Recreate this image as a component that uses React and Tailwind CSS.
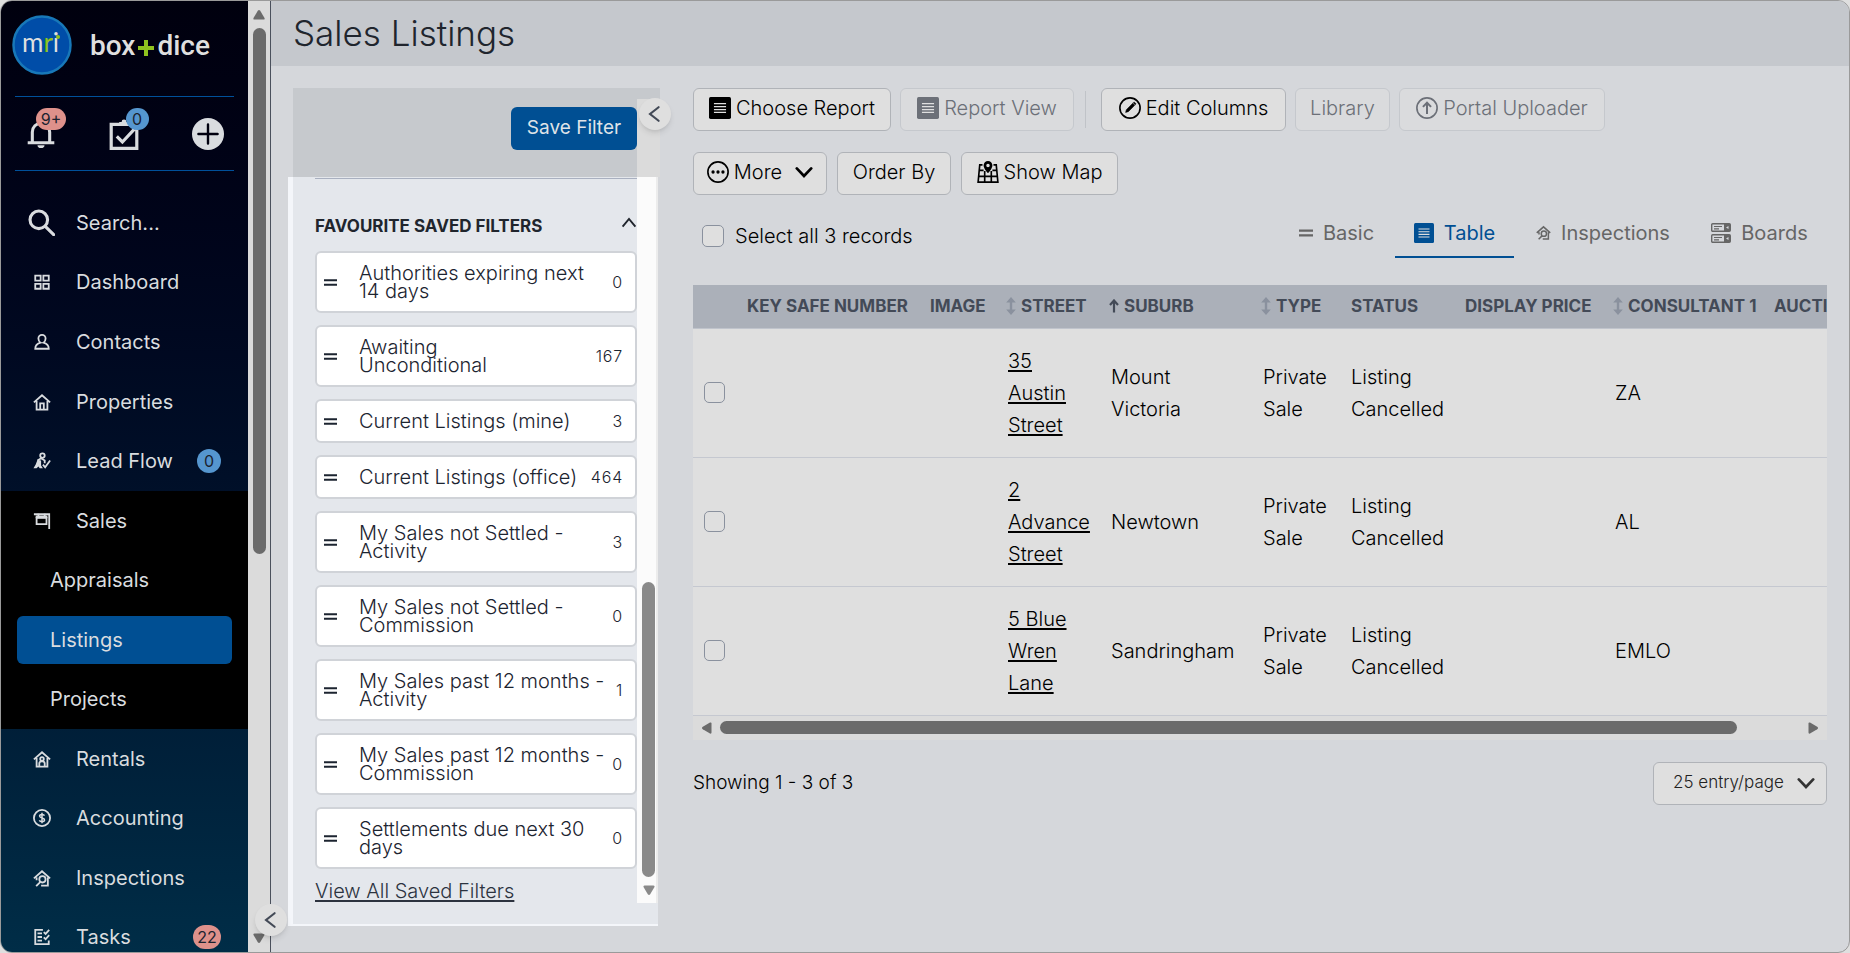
import clsx from "clsx";

const mainNav = [
  { label: "Dashboard", icon: "dashboard" },
  { label: "Contacts", icon: "contact" },
  { label: "Properties", icon: "home" },
  { label: "Lead Flow", icon: "lead", badge: "0", badgeClass: "bg-[#5596cf] w-6" },
];

const salesNav = [{ label: "Appraisals" }, { label: "Listings", active: true }, { label: "Projects" }];

const lowerNav = [
  { label: "Rentals", icon: "rentals" },
  { label: "Accounting", icon: "dollar" },
  { label: "Inspections", icon: "inspect" },
  { label: "Tasks", icon: "tasks", badge: "22", badgeClass: "bg-[#de918b] w-7" },
];

const filters = [
  { name: "Authorities expiring next\n14 days", count: 0 },
  { name: "Awaiting\nUnconditional", count: 167 },
  { name: "Current Listings (mine)", count: 3 },
  { name: "Current Listings (office)", count: 464 },
  { name: "My Sales not Settled -\nActivity", count: 3 },
  { name: "My Sales not Settled -\nCommission", count: 0 },
  { name: "My Sales past 12 months -\nActivity", count: 1 },
  { name: "My Sales past 12 months -\nCommission", count: 0 },
  { name: "Settlements due next 30\ndays", count: 0 },
];

const columns = [
  { label: "Key Safe Number", width: "w-[183px]" },
  { label: "Image", width: "w-[78px]" },
  { label: "Street", width: "w-[103px]", sort: "both" },
  { label: "Suburb", width: "w-[152px]", sort: "up" },
  { label: "Type", width: "w-[88px]", sort: "both" },
  { label: "Status", width: "w-[114px]" },
  { label: "Display Price", width: "w-[150px]" },
  { label: "Consultant 1", width: "w-[159px]", sort: "both" },
  { label: "Auction Date", width: "w-[200px]" },
];

const rows = [
  { street: "35\nAustin\nStreet", suburb: "Mount\nVictoria", type: "Private\nSale", status: "Listing\nCancelled", consultant: "ZA" },
  { street: "2\nAdvance\nStreet", suburb: "Newtown", type: "Private\nSale", status: "Listing\nCancelled", consultant: "AL" },
  { street: "5 Blue\nWren\nLane", suburb: "Sandringham", type: "Private\nSale", status: "Listing\nCancelled", consultant: "EMLO" },
];

const tabs = [
  { label: "Basic", icon: "lines", size: "size-[14px]", width: "w-[117px]" },
  { label: "Table", icon: "report", size: "size-5", width: "w-[119px]", active: true },
  { label: "Inspections", icon: "inspect", size: "size-[15px]", width: "w-[178px]" },
  { label: "Boards", icon: "boards", size: "size-5", width: "w-[135px]" },
];

const house = <path d="M1 10.500 10 2.500l9 8M4 9v9.500h12V9" />;

const icons = {
  bell: (
    <>
      <path d="M.5 16.300h19M3.800 16V8.500a6.200 6.200 0 0 1 12.400 0V16" strokeWidth="2.200" />
      <path d="M7.500 18h5a2.500 2 0 0 1-5 0z" fill="currentColor" stroke="none" />
    </>
  ),
  clipboard: (
    <>
      <path d="M2 4h16v15H2zM5.500 11.500l3.500 3.500L16.500 7" />
      <path d="M7 4.500V2.500h1.500a1.500 1.500 0 0 1 3 0H13v2z" fill="currentColor" stroke="none" />
    </>
  ),
  plus: (
    <>
      <circle cx="10" cy="10" r="10" fill="currentColor" stroke="none" />
      <path d="M10 4v12M4 10h12" stroke="#00000f" strokeWidth="1.500" strokeLinecap="round" />
    </>
  ),
  search: <path d="M8 1.500a6.500 6.500 0 1 1 0 13a6.500 6.500 0 0 1 0-13M13 13l6 6" strokeWidth="2.300" strokeLinecap="round" />,
  dashboard: <path d="M2.500 3h6v5.500h-6zM11.500 3h6v5.500h-6zM2.500 12h6v5.500h-6zM11.500 12h6v5.500h-6z" />,
  contact: <path d="M10 2a4 4 0 0 1 4 4c0 2-1.200 4-2.500 4.800 3.500.9 6 2.800 6 6.700h-15c0-3.900 2.500-5.800 6-6.700C7.200 10 6 8 6 6a4 4 0 0 1 4-4z" />,
  home: (
    <>
      {house}
      <path d="M8 18v-6.500h4V18" />
    </>
  ),
  lead: (
    <>
      <circle cx="10.500" cy="4" r="2.500" />
      <path d="M5 9.500 9 7l4 2.500v3M11 14l2.500 3L19 9.500" />
      <path d="M5 8.500l4 1v5.500l2 3H7.500L6 16l-2 2H.5l2.500-4z" fill="currentColor" stroke="none" />
    </>
  ),
  sales: (
    <>
      <path d="M1 2.500h17V19" />
      <path d="M4 6.500h11v7H4z" />
      <path d="M5 2h2v5H5zM12 2h2v5h-2zM3 4h13v3H3z" fill="currentColor" stroke="none" />
    </>
  ),
  rentals: (
    <>
      {house}
      <circle cx="10" cy="10" r="2" />
      <path d="M7 18v-3c0-1.500 1.300-2.300 3-2.300s3 .8 3 2.300v3" />
    </>
  ),
  dollar: (
    <>
      <circle cx="10" cy="10" r="9" />
      <path d="M12.800 7.300C12.300 6.200 11.200 6 10 6c-1.600 0-2.700.7-2.700 1.900 0 2.900 5.500 1.300 5.500 4.200 0 1.200-1.200 1.900-2.800 1.900-1.400 0-2.500-.5-2.900-1.600M10 4.200v11.600" strokeWidth="1.700" />
    </>
  ),
  inspect: (
    <>
      <path d="M1 10.500 10 2.500l9 8M4 9.500v3M9 18.500h7.500V9.500" />
      <circle cx="10.500" cy="11.500" r="3.500" />
      <path d="M8 14.500 3.500 19" />
    </>
  ),
  tasks: (
    <>
      <path d="M11 2H2.500v16h15v-4M5 6h5M5 10h5M5 14h5" />
      <path d="M12 4.500l2 2L18 2M12 10.500l2 2L18 8" />
    </>
  ),
  report: (
    <>
      <rect width="20" height="20" rx="1.500" fill="currentColor" stroke="none" />
      <path d="M4.500 6h11M4.500 8.700h11M4.500 11.400h11M4.500 14h11" stroke="#dfdfdf" strokeWidth="1.100" />
    </>
  ),
  pencil: (
    <>
      <circle cx="10" cy="10" r="9.200" strokeWidth="1.500" />
      <path d="M6 14l.7-2.500 5.800-5.800 1.800 1.800-5.800 5.800zM13 5.200l.8-.7 1.700 1.700-.8.800z" fill="currentColor" stroke="currentColor" strokeWidth=".5" />
    </>
  ),
  upload: (
    <>
      <circle cx="10" cy="10" r="9.200" strokeWidth="1.500" />
      <path d="M10 15.500V5.500M6.300 9 10 5.200 13.700 9" strokeWidth="1.800" />
    </>
  ),
  more: (
    <>
      <circle cx="10" cy="10" r="9.200" strokeWidth="1.500" />
      <path d="M5.500 10h.01M10 10h.01M14.500 10h.01" strokeWidth="3" strokeLinecap="round" />
    </>
  ),
  map: (
    <>
      <path d="M5 3.500H2.500L1 19.200h18L17.500 3.500H15M1.500 14h17M2 8.500h4M14 8.500h4M7 9v10M13 9v10" strokeWidth="1.500" />
      <path d="M10 0a4 4 0 0 1 4 4c0 3-4 7-4 7S6 7 6 4a4 4 0 0 1 4-4zm0 2.500a1.600 1.600 0 1 0 0 3.200 1.600 1.600 0 0 0 0-3.200z" fill="currentColor" fillRule="evenodd" stroke="none" />
    </>
  ),
  lines: <path d="M0 6.500h20M0 13.500h20" strokeWidth="3.200" />,
  boards: (
    <>
      <rect x=".7" y=".7" width="18.600" height="7.600" rx="1" strokeWidth="1.400" />
      <rect x=".7" y="11.700" width="18.600" height="7.600" rx="1" strokeWidth="1.400" />
      <path d="M13 1h6v7h-6zM13 12h6v7h-6z" fill="currentColor" stroke="none" />
      <path d="M3 3.500h8M3 5.800h5M3 14.500h8M3 16.800h5" strokeWidth="1.200" />
      <path d="M17.500 3v3L15 4.500zM17.500 14v3L15 15.500z" fill="#d5d7db" stroke="none" />
    </>
  ),
  left: <path d="M14 2.500 4.500 10l9.500 7.500" strokeWidth="2.400" strokeLinecap="round" />,
  up: <path d="M2 14.500 10 5l8 9.500" strokeWidth="2.400" />,
  down: <path d="M2 6l8 8.500L18 6" strokeWidth="3" strokeLinecap="round" />,
};

function Icon({ name, className }) {
  return (
    <svg viewBox="0 0 20 20" fill="none" stroke="currentColor" strokeWidth="2" aria-hidden="true" className={clsx("shrink-0", className)}>
      {icons[name]}
    </svg>
  );
}

function Triangle({ className }) {
  return (
    <svg viewBox="0 0 12 10" fill="currentColor" aria-hidden="true" className={clsx("w-3 h-[10px] shrink-0", className)}>
      <path d="M6 0q.7 0 1.200.8L11.500 8q.5 1.500-1 1.500h-9Q0 9.500.5 8L4.800.8Q5.300 0 6 0z" />
    </svg>
  );
}

function SortIcon({ type }) {
  if (type === "up") {
    return (
      <svg viewBox="0 0 10 14" fill="none" stroke="currentColor" strokeWidth="2.200" aria-hidden="true" className="shrink-0 w-[10px] h-[14px] mr-[5px]">
        <path d="M5 13.500V2M1 6l4-4.500L9 6" />
      </svg>
    );
  }
  return (
    <svg viewBox="0 0 10 18" fill="#8a919e" aria-hidden="true" className="shrink-0 w-[10px] h-[18px] mr-[5px]">
      <path d="M5 0l4.800 5.500H6.200v7h3.600L5 18 .2 12.500h3.600v-7H.2z" />
    </svg>
  );
}

function CollapseButton({ label, className }) {
  return (
    <button
      aria-label={label}
      className={clsx("absolute z-10 size-8 rounded-full bg-[#dfdfdf] text-[#434a57] shadow-md flex items-center justify-center", className)}
    >
      <Icon name="left" className="size-[18px]" />
    </button>
  );
}

function NavItem({ item }) {
  return (
    <a href="#" className="flex items-center pl-8 pr-[27px]">
      <Icon name={item.icon} className="size-[18px]" />
      <span className="ml-[25px]">{item.label}</span>
      {item.badge && (
        <span className={clsx("ml-auto h-6 rounded-full text-base text-[#1b2330] flex items-center justify-center", item.badgeClass)}>
          {item.badge}
        </span>
      )}
    </a>
  );
}

function Sidebar() {
  return (
    <aside className="w-[247px] shrink-0 overflow-hidden bg-linear-to-b from-[#00000e] via-[#000f28] to-[#002d47] text-[#d9dcdf]">
      <div className="h-[95px] flex items-start pt-[14px] pl-[11px]">
        <svg viewBox="0 0 60 60" className="size-[60px]" role="img" aria-label="mri">
          <circle cx="30" cy="30" r="28.500" fill="#004da8" stroke="#1878b8" strokeWidth="2.500" />
          <text x="10" y="37" fontSize="26" fontFamily="Lato, sans-serif" fill="#dfdfdf">
            m<tspan fill="#8fc31f">r</tspan>i
          </text>
          <circle cx="46" cy="22" r="2" fill="#8fc31f" />
        </svg>
        <div className="ml-[18px] mt-[13px] font-[Roboto] font-medium text-[28px] leading-9 text-[#dfdfdf] flex items-center">
          box
          <svg viewBox="0 0 16 16" className="size-4 mx-[3px] mt-1" role="img" aria-label="plus">
            <path d="M8 0v16M0 8h16" stroke="#8fc31f" strokeWidth="4" />
          </svg>
          dice
        </div>
      </div>

      <div className="mx-[14px] h-[75px] border-y border-[#00509a] flex items-center justify-between pl-3 pr-[10px]">
        <button aria-label="Notifications" className="relative">
          <Icon name="bell" className="size-[28px]" />
          <span className="absolute -top-3 left-[9px] w-[30px] h-[22px] rounded-full bg-[#de918b] text-base leading-[22px] text-[#1b2330]">9+</span>
        </button>
        <button aria-label="To do" className="relative">
          <Icon name="clipboard" className="size-8" />
          <span className="absolute -top-[10px] left-[18px] w-[23px] h-[22px] rounded-full bg-[#5596cf] text-base leading-[22px] text-[#1b2330]">0</span>
        </button>
        <button aria-label="Add">
          <Icon name="plus" className="size-8" />
        </button>
      </div>

      <nav className="mt-[22px] text-[20px]">
        <div className="h-[298px] grid auto-rows-fr">
          <label className="flex items-center pl-[27px]">
            <Icon name="search" className="size-[27px]" />
            <input type="text" aria-label="Search" placeholder="Search..." className="ml-[21px] w-36 bg-transparent outline-none placeholder:text-[#d9dcdf]" />
          </label>
          {mainNav.map((item) => (
            <NavItem key={item.label} item={item} />
          ))}
        </div>
        <div className="h-[238px] grid auto-rows-fr bg-black">
          <NavItem item={{ label: "Sales", icon: "sales" }} />
          {salesNav.map((item) => (
            <a
              key={item.label}
              href="#"
              className={clsx("mx-4 my-[6px] rounded-md flex items-center pl-[33px]", item.active && "bg-[#004f93]")}
            >
              {item.label}
            </a>
          ))}
        </div>
        <div className="h-[238px] grid auto-rows-fr">
          {lowerNav.map((item) => (
            <NavItem key={item.label} item={item} />
          ))}
        </div>
      </nav>
    </aside>
  );
}

function SidebarScrollbar() {
  return (
    <div className="relative w-[23px] shrink-0 bg-[#dbdbdb] border-r border-[#4a505c] text-[#6b6b6b] flex flex-col items-center pt-[9px] pb-[9px]">
      <Triangle />
      <div className="mt-2 w-[13px] h-[526px] rounded-full bg-[#6b6b6b]" />
      <Triangle className="mt-auto rotate-180" />
      <CollapseButton label="Collapse menu" className="bottom-4 -right-[17px]" />
    </div>
  );
}

function FilterPanel() {
  return (
    <section className="relative w-[372px] shrink-0 mt-[22px] ml-[17px]">
      <CollapseButton label="Collapse filters" className="top-[10px] -right-[11px]" />
      <div className="ml-[5px] h-[89px] bg-[#c6c9cd] flex">
        <div className="flex-1 flex justify-end pt-[19px]">
          <button className="h-[43px] w-[126px] rounded-md bg-[#004f93] text-[#dfe3e8] text-[19px] pb-px">Save Filter</button>
        </div>
        <div className="w-[23px] mt-[11px] bg-[#dbdbdb]" />
      </div>
      <div className="mr-[2px] flex h-[749px] bg-[#e4e7ec] border-l-[5px] border-b-2 border-[#f4f6fa]">
        <div className="flex-1 pl-[22px]">
          <div className="border-t border-[#a9b0c0] mt-px pt-[35px] flex justify-between items-start text-[#20252d]">
            <h2 className="text-[17px] leading-6 font-bold">FAVOURITE SAVED FILTERS</h2>
            <button aria-label="Toggle favourite saved filters">
              <Icon name="up" className="size-4 mt-px" />
            </button>
          </div>
          <ul className="mt-[13px] flex flex-col gap-3 text-[#1c2430]">
            {filters.map((f) => (
              <li key={f.name} className="flex items-center rounded-md border-2 border-[#d0d3d8] bg-white py-[11px] pl-[7px] pr-3">
                <Icon name="lines" className="size-[13px]" />
                <span className="ml-[22px] text-[20px] leading-[18px] font-light whitespace-pre">{f.name}</span>
                <span className="ml-auto text-base leading-[18px] font-light tracking-wider">{f.count}</span>
              </li>
            ))}
          </ul>
          <a href="#" className="inline-block mt-2 text-[20px] leading-7 font-light text-[#2c333f] underline underline-offset-2">
            View All Saved Filters
          </a>
        </div>
        <div className="w-[21px] h-[726px] bg-[#fbfbfb] text-[#8a8a8a] flex flex-col items-end justify-end pb-2 pr-px border-r-2 border-[#ececec]">
          <div className="w-[13px] h-[295px] rounded-full bg-[#8a8a8a]" />
          <Triangle className="mt-2 rotate-180" />
        </div>
      </div>
    </section>
  );
}

function ToolButton({ icon, chevron, disabled, className, children }) {
  return (
    <button
      disabled={disabled}
      className={clsx(
        "h-[43px] rounded-md border flex items-center justify-center gap-[5px] pb-[3px] text-[20px] font-light whitespace-nowrap",
        disabled ? "border-[#c5c8cd] bg-[#dadbdd] text-[#6c7078]" : "border-[#b0b3b8] bg-[#dfdfdf] text-black",
        className
      )}
    >
      {icon && <Icon name={icon} className="size-[22px]" />}
      {children}
      {chevron && <Icon name="down" className="size-[18px] ml-2" />}
    </button>
  );
}

function ListingsTable() {
  return (
    <div className="mt-[27px] overflow-hidden bg-[#dfdfdf]">
      <table className="table-fixed w-[1271px] text-left">
        <thead>
          <tr className="h-[43px] bg-[#abb0b9] border-b border-[#c0c4cc] text-[#434a57] text-[17px] font-bold whitespace-nowrap">
            <th className="w-[44px]" />
            {columns.map((col) => (
              <th key={col.label} className={clsx("uppercase", col.sort ? "pl-2" : "pl-[10px]", col.width)}>
                <span className="flex items-center">
                  {col.sort && <SortIcon type={col.sort} />}
                  {col.label}
                </span>
              </th>
            ))}
          </tr>
        </thead>
        <tbody className="text-[20px] leading-8 font-light text-black whitespace-pre-line">
          {rows.map((row) => (
            <tr key={row.consultant} className="border-b border-[#c5c8d0]">
              <td className="pl-[11px]">
                <input type="checkbox" aria-label={row.street} className="block appearance-none size-[21px] rounded-[5px] border border-[#8a919e]" />
              </td>
              <td />
              <td />
              <td className="px-[10px] py-4">
                <a href="#" className="underline underline-offset-2">{row.street}</a>
              </td>
              <td className="px-[10px]">{row.suburb}</td>
              <td className="px-[10px]">{row.type}</td>
              <td className="px-[10px]">{row.status}</td>
              <td />
              <td className="px-[10px]">{row.consultant}</td>
              <td />
            </tr>
          ))}
        </tbody>
      </table>
      <div className="h-6 bg-[#dbdbdb] text-[#6b6b6b] flex items-center px-2">
        <Triangle className="-rotate-90" />
        <div className="ml-[7px] w-[91%] h-[13px] rounded-full bg-[#6b6b6b]" />
        <Triangle className="ml-auto rotate-90" />
      </div>
    </div>
  );
}

function Listings() {
  return (
    <section className="flex-1 min-w-0 pl-[33px] pr-[22px] pt-[22px]">
      <div className="flex items-center gap-[9px]">
        <ToolButton icon="report" className="w-[198px]">Choose Report</ToolButton>
        <ToolButton icon="report" disabled className="w-[174px]">Report View</ToolButton>
        <div className="w-px h-[37px] ml-[2px] mr-[6px] bg-[#c0c3c8]" />
        <ToolButton icon="pencil" className="w-[185px]">Edit Columns</ToolButton>
        <ToolButton disabled className="w-[95px]">Library</ToolButton>
        <ToolButton icon="upload" disabled className="w-[206px]">Portal Uploader</ToolButton>
      </div>
      <div className="mt-[21px] flex items-center gap-[10px]">
        <ToolButton icon="more" chevron className="w-[134px]">More</ToolButton>
        <ToolButton className="w-[114px]">Order By</ToolButton>
        <ToolButton icon="map" className="w-[157px]">Show Map</ToolButton>
      </div>

      <div className="mt-[14px] flex items-start justify-between">
        <label className="mt-3 ml-[9px] flex items-center gap-[11px] text-[20px] font-light text-black">
          <input type="checkbox" className="appearance-none size-[22px] rounded-[5px] border border-[#8a919e] bg-[#dfdfdf]" />
          Select all 3 records
        </label>
        <div role="tablist" className="flex text-[20px] text-[#666666]">
          {tabs.map((tab) => (
            <button
              key={tab.label}
              role="tab"
              aria-selected={!!tab.active}
              className={clsx(
                "h-[49px] flex items-center justify-center gap-[10px] border-b-2",
                tab.width,
                tab.active ? "border-[#004f93] text-[#004f93]" : "border-transparent"
              )}
            >
              <Icon name={tab.icon} className={tab.size} />
              {tab.label}
            </button>
          ))}
        </div>
      </div>

      <ListingsTable />

      <div className="mt-[22px] flex items-center justify-between">
        <p className="text-[19px] font-light text-black">Showing 1 - 3 of 3</p>
        <div className="relative w-[174px]">
          <select
            aria-label="Entries per page"
            className="appearance-none w-full h-[43px] rounded-md border border-[#b0b3b8] bg-[#dfdfdf] pl-[19px] text-[17px] font-light text-[#222222]"
          >
            <option>25 entry/page</option>
          </select>
          <Icon name="down" className="absolute right-3 top-3 size-[18px] text-[#333333] pointer-events-none" />
        </div>
      </div>
    </section>
  );
}

export default function App() {
  return (
    <div className="h-screen bg-[#dfdfdf] font-[Inter,'Open_Sans',sans-serif]">
      <div className="h-full flex overflow-hidden rounded-xl border border-[#9a9a9a] bg-[#d5d7db]">
        <Sidebar />
        <SidebarScrollbar />
        <main className="flex-1 min-w-0">
          <header className="h-[65px] bg-[#c5c8cd] pl-[22px] pb-[2px] flex items-center">
            <h1 className="text-[35px] leading-10 font-light text-[#20252d]">Sales Listings</h1>
          </header>
          <div className="flex items-start">
            <FilterPanel />
            <Listings />
          </div>
        </main>
      </div>
    </div>
  );
}
